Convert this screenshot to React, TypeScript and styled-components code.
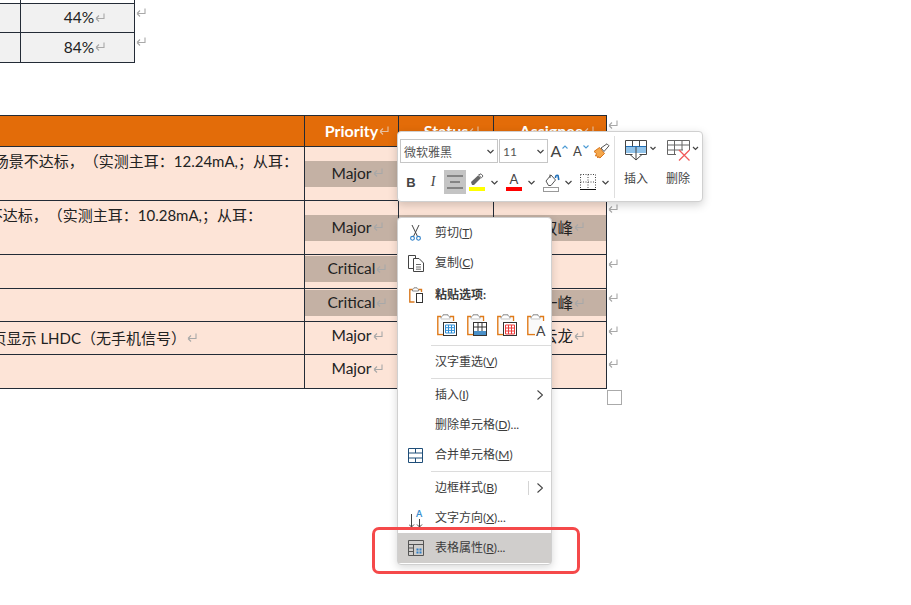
import styled, { createGlobalStyle } from "styled-components";

const GlobalStyle = createGlobalStyle`
  html, body {
    margin: 0;
    padding: 0;
    background: #fff;
    overflow: hidden;
  }
  body {
    font-family: "Lato", "Noto Sans CJK SC", sans-serif;
    text-spacing-trim: space-all;
  }
  u { text-underline-offset: 1px; }
`;

const LINE = "#232b36";

const Page = styled.div`
  position: relative;
  width: 911px;
  height: 605px;
  overflow: hidden;
  color: #222;
  font-size: 15.5px;
`;

/* ---------- top table ---------- */
const SmallTable = styled.div`
  display: grid;
  grid-template-columns: 21px 114px auto;
  grid-auto-rows: min-content;
`;

const SmallCell = styled.div<{ $stub?: boolean; $last?: boolean }>`
  box-sizing: border-box;
  height: ${(p) => (p.$stub ? "4px" : p.$last ? "30px" : "29px")};
  border-right: 1px solid ${LINE};
  border-bottom: 1px solid ${LINE};
  background: ${(p) => (p.$stub ? "#fff" : "#f1f1f1")};
  display: flex;
  align-items: center;
  justify-content: center;
  padding: 0 0 2px 14px;
`;

const EndMark = styled.div`
  display: flex;
  align-items: flex-start;
  padding-top: 4px;
`;

const Mark = styled.svg<{ $light?: boolean }>`
  width: 10px;
  height: 9px;
  flex: none;
  margin-left: 1px;
  stroke: ${(p) => (p.$light ? "#e8c0a0" : "#a8a8a8")};
  stroke-width: 1.1;
  fill: none;
`;

const ReturnMark = ({ light }: { light?: boolean }) => (
  <Mark $light={light} viewBox="0 0 10 9">
    <path d="M9 0.5V5.5H1M1 5.5L4 2.5M1 5.5L4 8.5" />
  </Mark>
);

/* ---------- issue table ---------- */
const IssueTable = styled.div`
  margin-top: 52px;
`;

const Row = styled.div<{ $h: number }>`
  display: grid;
  grid-template-columns: 305px 94px 95px 113px auto;
  height: ${(p) => p.$h}px;
`;

const Cell = styled.div<{ $head?: boolean; $tall?: boolean }>`
  box-sizing: border-box;
  min-width: 0;
  border-right: 1px solid ${LINE};
  border-bottom: 1px solid ${LINE};
  border-top: ${(p) => (p.$head ? `1px solid ${LINE}` : "0")};
  background: ${(p) => (p.$head ? "#e36c09" : "#fde4d7")};
  display: flex;
  flex-direction: column;
  justify-content: ${(p) => (p.$tall ? "center" : "flex-start")};
  padding-top: ${(p) => (p.$tall || p.$head ? "0" : "1px")};
  overflow: hidden;
`;

const Summary = styled.div<{ $end: number; $tall?: boolean }>`
  display: flex;
  justify-content: flex-end;
  align-items: center;
  white-space: nowrap;
  height: 26px;
  margin-top: ${(p) => (p.$tall ? "-1px" : "1px")};
  font-size: 15px;
  padding-right: ${(p) => p.$end}px;
`;

const Value = styled.div<{ $band?: boolean; $head?: boolean; $indent?: number }>`
  box-sizing: border-box;
  height: 26px;
  display: flex;
  align-items: center;
  justify-content: center;
  white-space: nowrap;
  padding: 0 0 2px ${(p) => p.$indent ?? 11}px;
  background: ${(p) => (p.$band ? "#c4b1a4" : "transparent")};
  color: ${(p) => (p.$head ? "#fff" : "inherit")};
  font-weight: ${(p) => (p.$head ? 700 : 400)};
  font-size: ${(p) => (p.$head ? "16px" : "inherit")};
`;

const RowEnd = styled.div<{ $top: number }>`
  display: flex;
  align-items: flex-start;
  padding-top: ${(p) => p.$top}px;
`;

const EndHandle = styled.div`
  box-sizing: border-box;
  width: 15px;
  height: 15px;
  margin: 1px 0 0 607px;
  border: 1px solid #aaa;
  background: #fff;
`;

const rows = [
  { h: 54, tall: true, end: 6, text: "场景不达标，（实测主耳：12.24mA,；从耳：", pri: "Major", band: true, who: "", whoBand: true, top: 4 },
  { h: 54, tall: true, end: 42, text: "不达标，（实测主耳：10.28mA,；从耳：", pri: "Major", band: true, who: "双峰", whoBand: true, top: 3 },
  { h: 34, tall: false, end: 0, text: "", pri: "Critical", band: true, who: "", whoBand: false, top: 4 },
  { h: 33, tall: false, end: 0, text: "", pri: "Critical", band: true, who: "一峰", whoBand: true, top: 4 },
  { h: 33, tall: false, end: 107, text: "页显示 LHDC（无手机信号）", mark: true, pri: "Major", band: false, who: "云龙", whoBand: false, top: 4 },
  { h: 34, tall: false, end: 0, text: "", pri: "Major", band: false, who: "", whoBand: false, top: 4 },
];

/* ---------- floating toolbar ---------- */
const Toolbar = styled.div`
  position: absolute;
  left: 397px;
  top: 131px;
  box-sizing: border-box;
  width: 306px;
  height: 71px;
  padding: 7px 0 0 2px;
  display: flex;
  background: #fff;
  border: 1px solid #d0d0d0;
  border-radius: 4px;
  box-shadow: 0 3px 10px rgba(0, 0, 0, 0.18);
`;

const ToolLeft = styled.div`
  width: 214px;
  display: flex;
  flex-direction: column;
  gap: 7px;
`;

const ToolRow = styled.div`
  display: flex;
  align-items: center;
  height: 24px;
`;

const Combo = styled.div<{ $w: number }>`
  box-sizing: border-box;
  width: ${(p) => p.$w}px;
  height: 24px;
  margin-right: 1px;
  padding: 0 3px 0 3px;
  display: flex;
  align-items: center;
  justify-content: space-between;
  border: 1px solid #c6c6c6;
  font-size: 12px;
  color: #555;
`;

const ToolButton = styled.div<{ $active?: boolean; $w?: number }>`
  width: ${(p) => p.$w ?? 22}px;
  height: 24px;
  flex: none;
  display: flex;
  flex-direction: column;
  align-items: center;
  justify-content: center;
  background: ${(p) => (p.$active ? "#c4c4c4" : "transparent")};
`;

const Bold = styled.span`
  font: 700 13px "Liberation Sans", sans-serif;
  color: #444;
`;

const Italic = styled.span`
  font: italic 400 14px "Liberation Serif", serif;
  color: #444;
`;

const GrowA = styled.span<{ $size: number }>`
  font: 400 ${(p) => p.$size}px/20px "Lato", sans-serif;
  color: #444;
`;

const SizeButton = styled.div<{ $w: number }>`
  width: ${(p) => p.$w}px;
  flex: none;
  display: flex;
  align-items: center;
  justify-content: center;
  gap: 1px;
`;

const ColorA = styled.span`
  font: 400 13px/13px "Lato", sans-serif;
  color: #444;
`;

const ColorBar = styled.div<{ $color: string }>`
  width: 16px;
  height: 4px;
  margin-top: 1px;
  background: ${(p) => p.$color};
`;

const CaretBox = styled.div<{ $w?: number }>`
  width: ${(p) => p.$w ?? 13}px;
  margin-right: ${(p) => (p.$w ? 0 : 2)}px;
  flex: none;
  display: flex;
  justify-content: center;
`;

const ToolDivider = styled.div`
  width: 1px;
  height: 62px;
  margin-top: -3px;
  background: #dedede;
`;

const BigButton = styled.div`
  width: 42px;
  margin-top: 1px;
  display: flex;
  flex-direction: column;
  align-items: center;
  font-size: 12px;
  color: #444;
`;

const BigLabel = styled.div`
  margin-top: 9px;
  line-height: 18px;
`;

const Caret = () => (
  <svg width="7" height="5" viewBox="0 0 7 5" fill="none" stroke="#444" strokeWidth="1.2">
    <path d="M0.5 1L3.5 4L6.5 1" />
  </svg>
);

const MiniArrow = ({ up }: { up?: boolean }) => (
  <svg width="6" height="4" viewBox="0 0 6 4" fill="none" stroke="#4a9ad4" strokeWidth="1.1" style={{ marginBottom: 9 }}>
    <path d={up ? "M0.5 3.5L3 1L5.5 3.5" : "M0.5 0.5L3 3L5.5 0.5"} />
  </svg>
);

const BrushIcon = () => (
  <svg width="17" height="16" viewBox="0 0 17 16">
    <path d="M1 8.5L6.5 4.5L11.5 10.5L7 15L5 13.5L5 15L3.5 12.5L2.5 13L3.5 10.5Z" fill="#f4a64a" stroke="#d9741a" strokeWidth="1" />
    <path d="M8 5L14 0.8L16 2.8L11 8.5Z" fill="#fff" stroke="#555" strokeWidth="1" />
  </svg>
);

const AlignIcon = () => (
  <svg width="16" height="14" viewBox="0 0 16 14" stroke="#444" strokeWidth="1.2">
    <path d="M0 1H16M3 7H13M0 13H16" />
  </svg>
);

const HighlighterIcon = () => (
  <svg width="16" height="13" viewBox="0 0 16 13">
    <path d="M3 12L2 9L9 2.5L12 5L5 12Z" fill="#666" />
    <path d="M9.5 2L12 0.8L14 3L12.5 4.8Z" fill="#fff" stroke="#666" />
  </svg>
);

const BucketIcon = () => (
  <svg width="17" height="21" viewBox="0 0 17 21" fill="none">
    <path d="M3 9L8 3L12.5 8L8 13.5H5.5Z" fill="#fff" stroke="#555" />
    <path d="M7 2.5V6" stroke="#555" />
    <path d="M12.5 6C12.5 3.5 13.5 3 15 3.5L15.8 8" stroke="#1f6fb8" strokeWidth="1.6" />
    <rect x="0.5" y="15.5" width="15" height="4" stroke="#999" />
  </svg>
);

const BorderIcon = () => (
  <svg width="16" height="16" viewBox="0 0 16 16" fill="none" stroke="#444">
    <path d="M0.5 0.5H15.5M0.5 0.5V15M15.5 0.5V15M8 0.5V15M0.5 8H15.5" strokeDasharray="1 1.5" />
    <path d="M0 15.5H16" stroke="#111" />
  </svg>
);

const InsertIcon = () => (
  <svg width="42" height="21" viewBox="0 0 42 21" fill="none">
    <path d="M10.5 6.5H31.5V13H10.5Z" fill="#90c2e9" stroke="none" />
    <path d="M10.5 6.5H31.5" stroke="#1f6fb8" />
    <path d="M17.5 14.5H10.5V0.5H31.5V14.5H24.5M17.5 0.5V6.5M24.5 0.5V6.5" stroke="#444" />
    <path d="M21 7V20M15 14.5L21 20L27 14.5" stroke="#444" />
    <path d="M35.5 7L38 9.5L40.5 7" stroke="#444" strokeWidth="1.2" />
  </svg>
);

const DeleteIcon = () => (
  <svg width="42" height="21" viewBox="0 0 42 21" fill="none">
    <path d="M19 14.5H10.5V0.5H32.5V10M10.5 5H32.5M10.5 10H26M17.5 0.5V14.5M25 0.5V10" stroke="#666" />
    <path d="M22 10L32.5 20.5M32.5 10L22 20.5" stroke="#f05a5a" strokeWidth="1.3" />
    <path d="M36 7L38.5 9.5L41 7" stroke="#444" strokeWidth="1.2" />
  </svg>
);

/* ---------- context menu ---------- */
const Menu = styled.div`
  position: absolute;
  left: 397px;
  top: 217px;
  box-sizing: border-box;
  width: 155px;
  height: 348px;
  background: #fff;
  border: 1px solid #d0d0d0;
  border-radius: 4px;
  box-shadow: 0 2px 8px rgba(0, 0, 0, 0.16);
  font-size: 12px;
  color: #3c3c3c;
`;

const MenuItem = styled.div<{ $selected?: boolean; $strong?: boolean }>`
  height: 30px;
  display: flex;
  align-items: center;
  background: ${(p) => (p.$selected ? "#d0cecc" : "transparent")};
  font-weight: ${(p) => (p.$strong ? 700 : 400)};
  margin-top: ${(p) => (p.$strong ? "2px" : "0")};
`;

const IconSlot = styled.div`
  width: 37px;
  flex: none;
  display: flex;
  justify-content: center;
  padding-right: 2px;
  box-sizing: border-box;
`;

const MenuLabel = styled.span`
  flex: 1;
  white-space: nowrap;
  padding-bottom: 3px;
`;

const MenuSep = styled.div<{ $before?: number; $after?: number }>`
  height: 1px;
  margin: ${(p) => p.$before ?? 1}px 0 ${(p) => p.$after ?? 1}px 33px;
  background: #dcdcdc;
`;

const SubArrow = styled.svg`
  width: 6px;
  height: 10px;
  margin-right: 8px;
  fill: none;
  stroke: #444;
  stroke-width: 1.1;
`;

const SubDivider = styled.div`
  width: 1px;
  height: 14px;
  margin-right: 8px;
  background: #d4d4d4;
`;

const PasteRow = styled.div`
  height: 30px;
  padding-left: 39px;
  display: flex;
  align-items: center;
  gap: 10px;
`;

const Highlight = styled.div`
  position: absolute;
  left: 372px;
  top: 527px;
  box-sizing: border-box;
  width: 208px;
  height: 47px;
  border: 3.5px solid #f5494a;
  border-radius: 7px;
`;

const Chevron = () => (
  <SubArrow viewBox="0 0 6 10">
    <path d="M0.5 0.5L5.5 5L0.5 9.5" />
  </SubArrow>
);

const ScissorsIcon = () => (
  <svg width="11" height="16" viewBox="0 0 11 16" fill="none">
    <path d="M2 0L7.3 11M9 0L3.7 11" stroke="#444" />
    <circle cx="2.5" cy="13.3" r="1.9" stroke="#2f80c8" strokeWidth="1.1" />
    <circle cx="8.5" cy="13.3" r="1.9" stroke="#2f80c8" strokeWidth="1.1" />
  </svg>
);

const CopyIcon = () => (
  <svg width="16" height="17" viewBox="0 0 16 17" fill="none" stroke="#444">
    <path d="M5 13.5H0.5V0.5H7.5V3" />
    <path d="M5.5 3.5H11L15.5 8V16.5H5.5Z" />
    <path d="M8 9.5H13M8 12H13M8 14.2H13" strokeWidth="0.8" />
  </svg>
);

const PasteIcon = () => (
  <svg width="14" height="16" viewBox="0 0 14 16" fill="none">
    <path d="M7 2.5H0.8V15H5.5M9 2.5H12.5V5" stroke="#d9791f" strokeWidth="1.4" />
    <path d="M3.5 4V2.5C4 2 5 1.8 5 0.8H8C8 1.8 9 2 9.5 2.5V4Z" stroke="#888" fill="#fff" />
    <rect x="7.5" y="6.5" width="6" height="9" stroke="#333" fill="#fff" />
  </svg>
);

const ClipBase = ({ children }: { children: React.ReactNode }) => (
  <svg width="20" height="22" viewBox="0 0 20 22" fill="none">
    <path d="M4 2.5H0.8V20.5H8M13 2.5H16.5V7" stroke="#e07b1a" strokeWidth="1.4" />
    <path d="M4 5V3C5 2.5 6 2 6 0.8H11C11 2 12 2.5 13 3V5Z" stroke="#888" fill="#fff" />
    <path d="M2 4H15.5V20H2Z" fill="#f7f7f7" opacity="0.6" />
    {children}
  </svg>
);

const PasteKeep = () => (
  <ClipBase>
    <rect x="6.5" y="8.5" width="13" height="13" stroke="#333" fill="#fff" />
    <path d="M8.5 11H17.5V19H8.5ZM11.5 11V19M14.5 11V19M8.5 13.7H17.5M8.5 16.4H17.5" stroke="#2f8fd8" />
  </ClipBase>
);

const PasteMerge = () => (
  <ClipBase>
    <rect x="6.5" y="8.5" width="13" height="13" stroke="#333" fill="#fff" />
    <path d="M11 8.5V17M15 8.5V17M6.5 13H19.5" stroke="#333" />
    <rect x="7" y="17" width="12" height="4" fill="#4a90c8" />
  </ClipBase>
);

const PasteRed = () => (
  <ClipBase>
    <rect x="6.5" y="8.5" width="13" height="13" stroke="#333" fill="#fff" />
    <path d="M8.5 11H17.5V20H8.5ZM11.5 11V20M14.5 11V20M8.5 14H17.5M8.5 17H17.5" stroke="#ee3b3b" />
  </ClipBase>
);

const PasteText = () => (
  <ClipBase>
    <text x="9" y="21.5" fontSize="14" fontFamily="Lato, sans-serif" fill="#444">A</text>
  </ClipBase>
);

const MergeIcon = () => (
  <svg width="15" height="15" viewBox="0 0 15 15" fill="none" stroke="#1f4e79">
    <path d="M0.5 0.5H14.5V14.5H0.5ZM0.5 5H14.5M0.5 10H14.5M7.5 0.5V5M7.5 10V14.5" />
  </svg>
);

const DirectionIcon = () => (
  <svg width="14" height="19" viewBox="0 0 14 19" fill="none">
    <path d="M2.5 5V18M0 15.5L2.5 18L5 15.5M10.5 10V18M8 15.5L10.5 18L13 15.5" stroke="#444" />
    <text x="7" y="8" fontSize="9" fontWeight="700" fontFamily="Lato, sans-serif" fill="#3a8fd0">A</text>
  </svg>
);

const TablePropsIcon = () => (
  <svg width="16" height="16" viewBox="0 0 16 16" fill="none">
    <path d="M0.5 0.5H15.5V15.5H0.5ZM0.5 4.5H15.5M5.5 4.5V15.5M0.5 8H5.5M0.5 11.5H5.5" stroke="#555" />
    <path d="M8.5 8.5H10.5V10.5H8.5ZM11.5 8.5H13.5V10.5H11.5ZM8.5 11.5H10.5V13.5H8.5ZM11.5 11.5H13.5V13.5H11.5Z" fill="#2f80c8" />
  </svg>
);

const App = () => {
  return (
    <Page>
      <GlobalStyle />

      <SmallTable>
        <SmallCell $stub />
        <SmallCell $stub />
        <div />
        <SmallCell />
        <SmallCell>
          44%
          <ReturnMark />
        </SmallCell>
        <EndMark>
          <ReturnMark />
        </EndMark>
        <SmallCell $last />
        <SmallCell $last>
          84%
          <ReturnMark />
        </SmallCell>
        <EndMark>
          <ReturnMark />
        </EndMark>
      </SmallTable>

      <IssueTable>
        <Row $h={32}>
          <Cell $head />
          <Cell $head $tall>
            <Value $head>
              Priority
              <ReturnMark light />
            </Value>
          </Cell>
          <Cell $head $tall>
            <Value $head>
              Status
              <ReturnMark light />
            </Value>
          </Cell>
          <Cell $head $tall>
            <Value $head $indent={14}>
              Assignee
              <ReturnMark light />
            </Value>
          </Cell>
          <RowEnd $top={5}>
            <ReturnMark />
          </RowEnd>
        </Row>
        {rows.map((row, i) => (
          <Row $h={row.h} key={i}>
            <Cell>
              {row.text && (
                <Summary $end={row.end} $tall={row.tall}>
                  {row.text}
                  {row.mark && <ReturnMark />}
                </Summary>
              )}
            </Cell>
            <Cell $tall={row.tall}>
              <Value $band={row.band}>
                {row.pri}
                <ReturnMark />
              </Value>
            </Cell>
            <Cell $tall={row.tall}>
              <Value $band={row.whoBand} />
            </Cell>
            <Cell $tall={row.tall}>
              <Value $band={row.whoBand} $indent={26}>
                {row.who}
                {row.who && <ReturnMark />}
              </Value>
            </Cell>
            <RowEnd $top={row.top}>
              <ReturnMark />
            </RowEnd>
          </Row>
        ))}
      </IssueTable>
      <EndHandle />

      <Toolbar>
        <ToolLeft>
          <ToolRow>
            <Combo $w={98}>
              微软雅黑
              <Caret />
            </Combo>
            <Combo $w={49}>
              11
              <Caret />
            </Combo>
            <SizeButton $w={21}>
              <GrowA $size={16}>A</GrowA>
              <MiniArrow up />
            </SizeButton>
            <SizeButton $w={22}>
              <GrowA $size={13}>A</GrowA>
              <MiniArrow />
            </SizeButton>
            <SizeButton $w={19}>
              <BrushIcon />
            </SizeButton>
          </ToolRow>
          <ToolRow>
            <ToolButton>
              <Bold>B</Bold>
            </ToolButton>
            <ToolButton>
              <Italic>I</Italic>
            </ToolButton>
            <ToolButton $active>
              <AlignIcon />
            </ToolButton>
            <ToolButton>
              <HighlighterIcon />
              <ColorBar $color="#ffff00" />
            </ToolButton>
            <CaretBox>
              <Caret />
            </CaretBox>
            <ToolButton>
              <ColorA>A</ColorA>
              <ColorBar $color="#ff0000" />
            </ToolButton>
            <CaretBox>
              <Caret />
            </CaretBox>
            <ToolButton>
              <BucketIcon />
            </ToolButton>
            <CaretBox>
              <Caret />
            </CaretBox>
            <ToolButton>
              <BorderIcon />
            </ToolButton>
            <CaretBox $w={12}>
              <Caret />
            </CaretBox>
          </ToolRow>
        </ToolLeft>
        <ToolDivider />
        <BigButton>
          <InsertIcon />
          <BigLabel>插入</BigLabel>
        </BigButton>
        <BigButton>
          <DeleteIcon />
          <BigLabel>删除</BigLabel>
        </BigButton>
      </Toolbar>

      <Menu>
        <MenuItem>
          <IconSlot><ScissorsIcon /></IconSlot>
          <MenuLabel>剪切(<u>T</u>)</MenuLabel>
        </MenuItem>
        <MenuItem>
          <IconSlot><CopyIcon /></IconSlot>
          <MenuLabel>复制(<u>C</u>)</MenuLabel>
        </MenuItem>
        <MenuItem $strong>
          <IconSlot><PasteIcon /></IconSlot>
          <MenuLabel>粘贴选项:</MenuLabel>
        </MenuItem>
        <PasteRow>
          <PasteKeep />
          <PasteMerge />
          <PasteRed />
          <PasteText />
        </PasteRow>
        <MenuSep $before={5} $after={1} />
        <MenuItem>
          <IconSlot />
          <MenuLabel>汉字重选(<u>V</u>)</MenuLabel>
        </MenuItem>
        <MenuSep />
        <MenuItem>
          <IconSlot />
          <MenuLabel>插入(<u>I</u>)</MenuLabel>
          <Chevron />
        </MenuItem>
        <MenuItem>
          <IconSlot />
          <MenuLabel>删除单元格(<u>D</u>)...</MenuLabel>
        </MenuItem>
        <MenuItem>
          <IconSlot><MergeIcon /></IconSlot>
          <MenuLabel>合并单元格(<u>M</u>)</MenuLabel>
        </MenuItem>
        <MenuSep />
        <MenuItem>
          <IconSlot />
          <MenuLabel>边框样式(<u>B</u>)</MenuLabel>
          <SubDivider />
          <Chevron />
        </MenuItem>
        <MenuItem>
          <IconSlot><DirectionIcon /></IconSlot>
          <MenuLabel>文字方向(<u>X</u>)...</MenuLabel>
        </MenuItem>
        <MenuItem $selected>
          <IconSlot><TablePropsIcon /></IconSlot>
          <MenuLabel>表格属性(<u>R</u>)...</MenuLabel>
        </MenuItem>
      </Menu>

      <Highlight />
    </Page>
  );
};

export default App;
